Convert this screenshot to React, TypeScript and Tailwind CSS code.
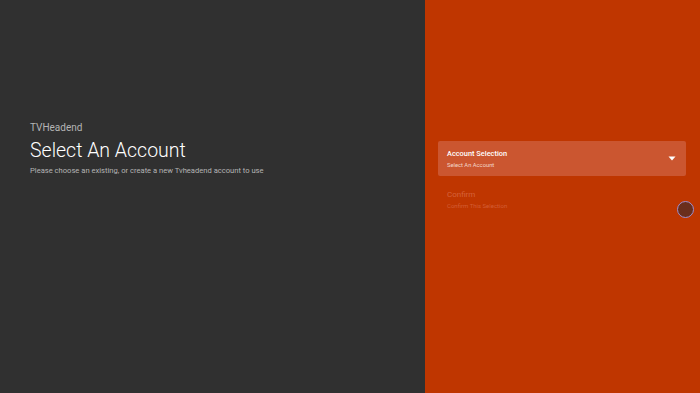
export default function App() {
  return (
    <div className="flex w-[700px] h-[393px] font-['Roboto',sans-serif]">
      <div className="w-[425px] h-full bg-[#303030] pl-[30px] pt-[122px]">
        <p className="text-[10px] leading-[12px] text-[#b4b4b4]">TVHeadend</p>
        <h1 className="text-[19.5px] leading-[24px] font-light text-white mt-[5px]">Select An Account</h1>
        <p className="text-[7.6px] leading-[10px] text-[#b4b4b4] mt-[3px]">
          Please choose an existing, or create a new Tvheadend account to use
        </p>
      </div>
      <div className="relative flex-1 h-full bg-[#bf3600] pl-[13px] pr-[14px] pt-[141px]">
        <div className="flex items-center justify-between h-[35px] rounded-[2px] bg-[#cb5630] pl-[9px] pr-[9px]">
          <div className="flex flex-col">
            <span className="text-[7.4px] leading-[10px] font-medium text-white">Account Selection</span>
            <span className="text-[5.8px] leading-[8px] text-[#f3d6cb] mt-[2px]">Select An Account</span>
          </div>
          <svg width="8" height="5" viewBox="0 0 8 5" className="mr-[1px]">
            <path d="M0.5 0.5 L7.5 0.5 L4 4.5 Z" fill="#ffffff" />
          </svg>
        </div>
        <div className="flex flex-col pl-[9px] mt-[14px]">
          <span className="text-[8px] leading-[10px] text-[#d6623b]">Confirm</span>
          <span className="text-[6px] leading-[8px] text-[#d35d35] mt-[2px]">Confirm This Selection</span>
        </div>
        <div className="absolute left-[252px] top-[201px] w-[17px] h-[17px] rounded-full bg-[#6a2e1c] border border-[#9c8fd0]" />
      </div>
    </div>
  );
}
